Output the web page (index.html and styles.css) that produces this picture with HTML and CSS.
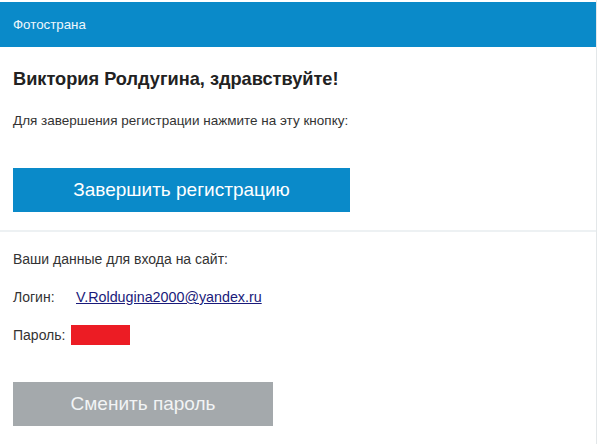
FILE: index.html
```html
<!DOCTYPE html>
<html lang="ru">
<head>
<meta charset="utf-8">
<title>Фотострана</title>
<link rel="stylesheet" href="styles.css">
</head>
<body>
<div class="mail">
  <div class="header">Фотострана</div>
  <div class="section top">
    <h1 class="title">Виктория Ролдугина, здравствуйте!</h1>
    <p class="text">Для завершения регистрации нажмите на эту кнопку:</p>
    <a class="btn btn-blue" href="#">Завершить регистрацию</a>
  </div>
  <div class="divider"></div>
  <div class="section bottom">
    <p class="text">Ваши данные для входа на сайт:</p>
    <div class="row login">
      <span class="label">Логин:</span>
      <a class="link" href="#">V.Roldugina2000@yandex.ru</a>
    </div>
    <div class="row pass">
      <span class="label">Пароль:</span>
      <span class="redact"></span>
    </div>
    <a class="btn btn-gray" href="#">Сменить пароль</a>
  </div>
</div>
</body>
</html>
```
FILE: styles.css
```css
html, body {
  margin: 0;
  padding: 0;
  background: #ffffff;
}
body {
  font-family: "Liberation Sans", Arial, sans-serif;
  color: #333333;
}
.mail {
  width: 597px;
  height: 444px;
  border-right: 1px solid #e3e7e9;
  padding-top: 2px;
  box-sizing: border-box;
}
.header {
  height: 45px;
  background: #0a8ac9;
  color: #eef7fc;
  font-size: 13.3px;
  line-height: 45px;
  padding-left: 13px;
}
.section {
  padding: 0 13px;
}
.top {
  padding-top: 21px;
  padding-bottom: 18px;
}
.title {
  margin: 0;
  font-size: 18.2px;
  line-height: 22px;
  font-weight: bold;
  color: #222222;
}
.text {
  margin: 0;
  font-size: 14px;
  line-height: 16px;
}
.top .text {
  margin-top: 23px;
  font-size: 13.5px;
}
.btn {
  display: flex;
  align-items: center;
  justify-content: center;
  height: 44px;
  color: #ffffff;
  font-size: 19px;
  text-decoration: none;
}
.btn-blue {
  margin-top: 39px;
  width: 337px;
  background: #0a8ac9;
}
.divider {
  height: 2px;
  background: #edf1f3;
}
.bottom {
  padding-top: 19px;
}
.row {
  display: flex;
  align-items: center;
  font-size: 14px;
  line-height: 16px;
}
.login {
  margin-top: 22px;
}
.login .label {
  width: 63px;
}
.link {
  color: #1a1a7a;
  text-decoration: underline;
  font-size: 14.3px;
}
.pass {
  margin-top: 20px;
  height: 20px;
}
.pass .label {
  margin-right: 6px;
}
.redact {
  display: block;
  width: 59px;
  height: 20px;
  background: #ec1c24;
}
.btn-gray {
  margin-top: 37px;
  width: 260px;
  background: #a4a9ac;
  color: #f2f4f5;
}
```
